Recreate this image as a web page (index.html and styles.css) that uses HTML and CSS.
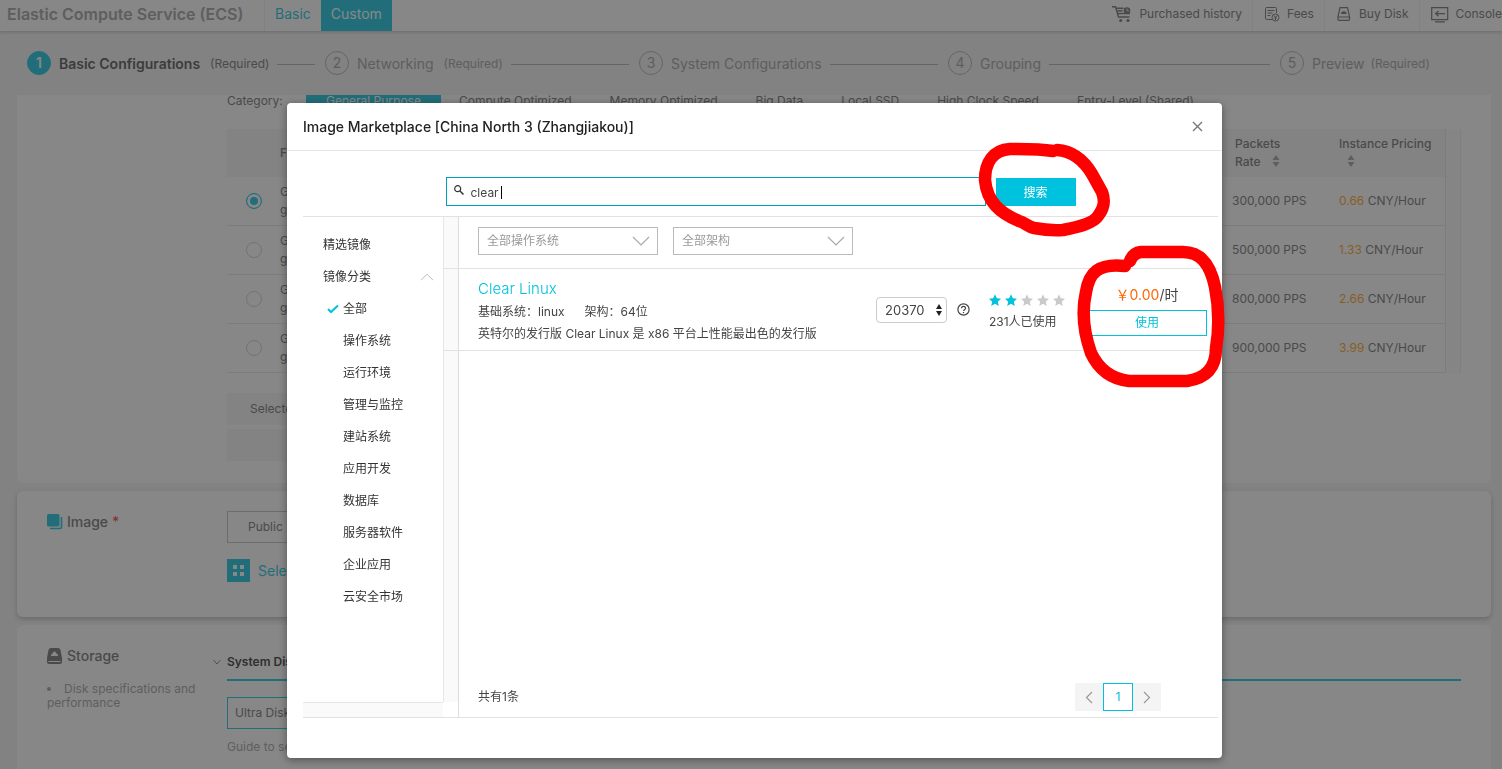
FILE: index.html
```html
<!DOCTYPE html>
<html lang="en">
<head>
<meta charset="utf-8">
<meta name="viewport" content="width=device-width, initial-scale=1">
<title>Elastic Compute Service (ECS)</title>
<link rel="stylesheet" href="styles.css">
</head>
<body>
<div class="page">
  <header class="topbar">
    <h1 class="brand">Elastic Compute Service (ECS)</h1>
    <nav class="modes">
      <a class="mode" href="#basic">Basic</a>
      <a class="mode mode-active" href="#custom">Custom</a>
    </nav>
    <nav class="links">
      <a class="link" href="#history">
        <svg width="20" height="18" viewBox="0 0 20 18" fill="none" stroke="currentColor" stroke-width="1.4"><path d="M0 1.7h3.500l3 10.300h11M4.500 3.200h7M5.500 5.800h5M6 8.500h12"/><circle cx="15" cy="5.500" r="3.300" fill="currentColor" stroke="none"/><path d="M15 3.500v2.200h2" stroke="#fff" stroke-width=".8"/><circle cx="8.700" cy="15.500" r="1.600" fill="currentColor" stroke="none"/><circle cx="16" cy="15.500" r="1.600" fill="currentColor" stroke="none"/></svg>
        <span>Purchased history</span>
      </a>
      <a class="link" href="#fees">
        <svg width="16" height="16" viewBox="0 0 16 16" fill="none" stroke="currentColor"><path d="M12.500 7V2.500a1 1 0 0 0-1-1h-9a1 1 0 0 0-1 1v10a1 1 0 0 0 1 1H8M3.500 4.500h7M3.500 7h5M3.500 9.500h3"/><circle cx="11.500" cy="11.500" r="3.500"/><path d="m10 9.500 1.500 2 1.500-2M11.500 11.500V14M10.300 12h2.400"/></svg>
        <span>Fees</span>
      </a>
      <a class="link" href="#disk">
        <svg width="16" height="16" viewBox="0 0 16 16" fill="none" stroke="currentColor" stroke-width="1.200"><path d="M4 1.700h7.500l2 9v2.600a1 1 0 0 1-1 1h-9.500a1 1 0 0 1-1-1v-2.600zM2 11h11.500"/><path d="M5 8a2.800 2.800 0 0 1 5.600 0z" fill="currentColor" stroke="none"/></svg>
        <span>Buy Disk</span>
      </a>
      <a class="link" href="#console">
        <svg width="18" height="17" viewBox="0 0 18 17" fill="none" stroke="currentColor" stroke-width="1.200"><path d="M.7 1.600h16v12H.7zM4 15.800h10M14 7.600H5M7.500 5 4.700 7.600l2.800 2.600"/></svg>
        <span>Console</span>
      </a>
    </nav>
  </header>

  <ol class="steps">
    <li class="step step-current"><span class="num">1</span><span class="name">Basic Configurations</span><span class="req">(Required)</span><i class="rule"></i></li>
    <li class="step"><span class="num">2</span><span class="name">Networking</span><span class="req">(Required)</span><i class="rule"></i></li>
    <li class="step"><span class="num">3</span><span class="name">System Configurations</span><i class="rule"></i></li>
    <li class="step"><span class="num">4</span><span class="name">Grouping</span><i class="rule"></i></li>
    <li class="step"><span class="num">5</span><span class="name">Preview</span><span class="req req-near">(Required)</span></li>
  </ol>

  <main class="cards">
    <section class="card card-instance">
      <div></div>
      <div class="card-body">
        <div class="categories">
          <span class="cat-label">Category:</span>
          <button class="cat cat-active">General Purpose</button>
          <button class="cat">Compute Optimized</button>
          <button class="cat">Memory Optimized</button>
          <button class="cat">Big Data</button>
          <button class="cat">Local SSD</button>
          <button class="cat">High Clock Speed</button>
          <button class="cat">Entry-Level (Shared)</button>
        </div>
        <div class="table-wrap">
          <table class="types">
            <colgroup><col class="c-radio"><col><col class="c-pps"><col class="c-price"></colgroup>
            <thead>
              <tr><th></th><th>Family</th><th class="inset">Packets<br>Rate <svg class="sort" width="8" height="12" viewBox="0 0 8 12"><path d="M4 0l3.500 5h-7zM4 12l3.500-5h-7z" fill="currentColor"/></svg></th><th>Instance Pricing<br><svg class="sort sort-only" width="8" height="12" viewBox="0 0 8 12"><path d="M4 0l3.500 5h-7zM4 12l3.500-5h-7z" fill="currentColor"/></svg></th></tr>
            </thead>
            <tbody>
              <tr><td class="pick"><input type="radio" name="type" aria-label="300,000 PPS" checked></td><td>General<br>g5</td><td>300,000 PPS</td><td><b>0.66</b> CNY/Hour</td></tr>
              <tr><td class="pick"><input type="radio" name="type" aria-label="500,000 PPS"></td><td>General<br>g5</td><td>500,000 PPS</td><td><b>1.33</b> CNY/Hour</td></tr>
              <tr><td class="pick"><input type="radio" name="type" aria-label="800,000 PPS"></td><td>General<br>g5</td><td>800,000 PPS</td><td><b>2.66</b> CNY/Hour</td></tr>
              <tr><td class="pick"><input type="radio" name="type" aria-label="900,000 PPS"></td><td>General<br>g5</td><td>900,000 PPS</td><td><b>3.99</b> CNY/Hour</td></tr>
            </tbody>
          </table>
        </div>
        <div class="summary">Selected</div>
        <div class="summary"></div>
      </div>
    </section>

    <section class="card card-image">
      <h2 class="card-title">
        <svg width="16" height="16" viewBox="0 0 16 16"><rect width="12.500" height="12.500" rx="1.500" fill="#00c1de"/><path d="M14.500 3v10a1.500 1.500 0 0 1-1.500 1.500H3" fill="none" stroke="#00c1de" stroke-width="1.600"/></svg>
        Image <span class="must">*</span>
      </h2>
      <div class="card-body">
        <button class="tab-button">Public</button>
        <a class="market" href="#market">
          <svg width="23" height="23" viewBox="0 0 23 23"><path fill="#00c1de" d="M0 0h23v23H0z"/><path fill="#fff" d="M6 6h4v4H6zM13 6h4v4h-4zM6 13h4v4H6zM13 13h4v4h-4z"/></svg>
          <span>Select</span>
        </a>
      </div>
    </section>

    <section class="card card-storage">
      <div>
        <h2 class="card-title">
          <svg width="16" height="16" viewBox="0 0 16 16"><path fill="#666" fill-rule="evenodd" d="M4 0h7Q13 0 13.500 2L15 10v4a2 2 0 0 1-2 2H2a2 2 0 0 1-2-2v-4L1.500 2Q2 0 4 0zM4 8h7q.5-2-1.500-2.500Q9 3.500 7.500 3.500T5.500 5.500Q3.500 6 4 8zM1.500 13v1h12v-1z"/></svg>
          Storage
        </h2>
        <ul class="notes"><li>Disk specifications and performance</li></ul>
      </div>
      <div class="card-body">
        <h3 class="disk-title"><svg width="10" height="10" viewBox="0 0 10 10"><path d="m1.500 3 3.500 4 3.500-4" fill="none" stroke="#777"/></svg>System Disk</h3>
        <button class="disk-type">Ultra Disk</button>
        <p class="guide">Guide to se</p>
      </div>
    </section>
  </main>
</div>

<div class="mask">
  <section class="modal" role="dialog" aria-labelledby="dlg">
    <header class="modal-head">
      <h2 class="modal-title" id="dlg">Image Marketplace [China North 3 (Zhangjiakou)]</h2>
      <button class="close" aria-label="Close"><svg width="11" height="11" viewBox="0 0 11 11"><path d="m1 1 9 9M10 1l-9 9" stroke="#777" stroke-width="1.400"/></svg></button>
    </header>

    <div class="market-box">
      <form class="search">
        <label class="field">
          <svg class="lens" width="10" height="10" viewBox="0 0 10 10" fill="none" stroke="#333"><circle cx="3.700" cy="3.700" r="3" stroke-width="1.200"/><path d="m6 6 3.500 3.500" stroke-width="1.500"/></svg>
          <input class="query" type="text" value="clear" aria-label="搜索">
          <i class="caret"></i>
        </label>
        <button class="go" type="button">搜索</button>
      </form>

      <div class="browser">
        <aside class="side">
          <ul class="menu">
            <li><a href="#featured">精选镜像</a></li>
            <li><a class="group" href="#groups">镜像分类 <svg width="14" height="8" viewBox="0 0 14 8"><path d="m1 7.200 6-6 6 6" fill="none" stroke="#bbb"/></svg></a></li>
            <li><a class="sub" href="#all"><svg class="tick" width="12" height="10" viewBox="0 0 12 10"><path d="m1 5 3 3 7-6.500" fill="none" stroke="#00c1de" stroke-width="2"/></svg>全部</a></li>
            <li><a class="sub" href="#os">操作系统</a></li>
            <li><a class="sub" href="#runtime">运行环境</a></li>
            <li><a class="sub" href="#manage">管理与监控</a></li>
            <li><a class="sub" href="#site">建站系统</a></li>
            <li><a class="sub" href="#dev">应用开发</a></li>
            <li><a class="sub" href="#db">数据库</a></li>
            <li><a class="sub" href="#server">服务器软件</a></li>
            <li><a class="sub" href="#business">企业应用</a></li>
            <li><a class="sub" href="#security">云安全市场</a></li>
          </ul>
          <div class="track-v"></div>
          <div class="track-h"></div>
        </aside>

        <div class="list">
          <div class="filters">
            <span class="drop"><select aria-label="操作系统"><option>全部操作系统</option></select><svg width="18" height="10" viewBox="0 0 18 10"><path d="m1 1 8 8 8-8" fill="none" stroke="#aaa" stroke-width="1.200"/></svg></span>
            <span class="drop"><select aria-label="架构"><option>全部架构</option></select><svg width="18" height="10" viewBox="0 0 18 10"><path d="m1 1 8 8 8-8" fill="none" stroke="#aaa" stroke-width="1.200"/></svg></span>
          </div>

          <article class="result">
            <div class="info">
              <h3><a href="#clear">Clear Linux</a></h3>
              <p class="meta"><span>基础系统：linux</span><span>架构：64位</span></p>
              <p>英特尔的发行版 Clear Linux 是 x86 平台上性能最出色的发行版</p>
            </div>
            <div class="version">
              <span class="ver"><select aria-label="Version"><option>20370</option></select><svg width="6" height="12" viewBox="0 0 6 12"><path d="M3 0l3 5H0zM3 12l3-5H0z" fill="#222"/></svg></span>
              <svg width="13" height="13" viewBox="0 0 13 13" fill="none" stroke="#444" stroke-width="1.200"><circle cx="6.500" cy="6.500" r="5.600"/><path d="M4.500 5.300c0-2.600 4-2.600 4 0 0 1.300-2 1.400-2 2.700M6.500 9v1.300"/></svg>
            </div>
            <div class="usage">
              <svg width="78" height="13" viewBox="0 0 78 13"><defs><path id="star" d="m6 .2 1.800 4.100 4.200.4-3.200 3 1 4.300L6 9.700 2.200 12l1-4.300L0 4.700l4.200-.4z"/></defs><g fill="#00c1de"><use href="#star"/><use href="#star" x="16"/></g><g fill="#c8cacc"><use href="#star" x="32"/><use href="#star" x="48"/><use href="#star" x="64"/></g></svg>
              <span>231人已使用</span>
            </div>
            <div class="buy">
              <p class="price"><b>￥0.00</b>/时</p>
              <button class="use">使用</button>
            </div>
          </article>

          <footer class="pager">
            <span>共有1条</span>
            <nav class="pages">
              <button class="page-btn" aria-label="Previous"><svg width="8" height="13" viewBox="0 0 8 13"><path d="M7 1 1.500 6.500 7 12" fill="none" stroke="#999" stroke-width="1.200"/></svg></button>
              <button class="page-btn page-on">1</button>
              <button class="page-btn" aria-label="Next"><svg width="8" height="13" viewBox="0 0 8 13"><path d="m1 1 5.500 5.500L1 12" fill="none" stroke="#999" stroke-width="1.200"/></svg></button>
            </nav>
          </footer>
        </div>
      </div>
    </div>

    <svg class="marks" width="260" height="260" viewBox="970 136 260 260" fill="none" stroke="#f00" stroke-width="12.500" stroke-linecap="round" stroke-linejoin="round" aria-hidden="true">
      <path d="M1053 151C1040 149 1022 149 1010 149C993 150 985 163 985 180C987 202 1000 213 1019 221C1026 223 1028 227 1034 228Q1050 231 1063 230C1078 227 1094 223 1098 216C1105 207 1105 200 1102 192L1092 174C1083 159 1072 151 1057 150"/>
      <path d="M1125 266C1098 263 1089 273 1086 292C1081 314 1085 336 1091 353C1099 370 1111 379 1129 381H1187C1206 378 1216 368 1216 348C1219 330 1219 307 1215 287C1210 263 1200 252 1183 252H1141Q1133 253 1130 261"/>
    </svg>
  </section>
</div>
</body>
</html>
```
FILE: styles.css
```css
* { box-sizing: border-box; }
body {
  margin: 0;
  background: #f2f2f2;
  color: #666;
  font: 12px/18px Inter, "Noto Sans CJK SC", sans-serif;
}
h1, h2, h3, p, ul, ol { margin: 0; padding: 0; font-size: inherit; font-weight: inherit; }
ul, ol { list-style: none; }
a { color: inherit; text-decoration: none; }
button, input, select { font: inherit; color: inherit; margin: 0; border-radius: 0; }
svg { display: block; flex: none; }

.page { height: 100vh; overflow: hidden; display: flex; flex-direction: column; }

.topbar {
  display: flex;
  flex: none;
  height: 31px;
  padding-left: 7px;
  background: #fff;
  box-shadow: 0 1px 3px rgba(0, 0, 0, .25);
  line-height: 28px;
  overflow: hidden;
}
.brand { width: 257px; font-size: 16px; font-weight: 600; color: #999; white-space: nowrap; }
.modes { display: flex; border-left: 1px solid #f0f0f0; font-size: 14px; }
.mode { padding: 0 10px; color: #00c1de; }
.mode-active { background: #00c1de; color: #fff; }
.links { display: flex; margin-left: auto; }
.link { display: flex; align-items: center; gap: 7px; height: 31px; padding: 0 10px 3px 11px; border-right: 1px solid #f0f0f0; white-space: nowrap; }
.link:last-child { padding-right: 0; border: 0; }

.steps {
  display: grid;
  flex: none;
  grid-template-columns: 298fr 314fr 309fr 332fr 222px;
  height: 64px;
  padding-left: 27px;
  color: #999;
}
.step { display: flex; align-items: center; white-space: nowrap; }
.num { width: 24px; height: 24px; margin-right: 8px; border: 1px solid #aaa; border-radius: 50%; font-size: 14px; line-height: 22px; text-align: center; }
.name { padding-top: 2px; font-size: 14px; }
.req { margin-left: 10px; padding-top: 2px; }
.req-near { margin-left: 6px; }
.rule { flex: 1; height: 1px; margin: 2px 10px 0 8px; background: #aaa; }
.step-current { color: #666; }
.step-current .num { border-color: #00c1de; background: #00c1de; color: #fff; font-weight: 600; }
.step-current .name { font-weight: 600; color: #444; }

.cards { flex: 1; display: flex; flex-direction: column; gap: 8px; min-height: 0; padding: 0 11px 0 17px; overflow: hidden; }
.card { display: grid; flex: none; grid-template-columns: 180px 1fr; padding: 20px 30px; background: #fff; border-radius: 6px; }
.card-instance { padding-top: 0; padding-bottom: 18px; border-radius: 0 0 6px 6px; }
.card-image { min-height: 126px; box-shadow: 0 2px 5px rgba(0, 0, 0, .25); }
.card-storage { min-height: 160px; }
.card-title { display: flex; gap: 4px; align-items: center; height: 22px; font-size: 14px; font-weight: 500; }
.must { color: #e33; }

.categories { display: flex; height: 20px; line-height: 12px; white-space: nowrap; }
.cat-label { width: 79px; }
.cat { display: flex; padding: 0 20px; margin-right: -2px; border: 0; background: none; }
.cat-active { background: #00c1de; color: #fff; }
.table-wrap { margin-top: 14px; padding-right: 14px; background: #fafafa; border-right: 1px solid #eaeaea; }
.types { width: 100%; table-layout: fixed; border-collapse: separate; border-spacing: 0; border-right: 1px solid #e4e4e4; background: #fff; }
.c-radio { width: 46px; }
.c-pps { width: 107px; }
.c-price { width: 113px; }
.types th { height: 48px; padding: 0 7px; background: #f5f5f5; font-weight: 500; text-align: left; white-space: nowrap; }
.types .inset { padding-left: 10px; }
.types td { height: 49px; padding: 0 7px; border-bottom: 1px solid #e4e4e4; }
.types b { font-weight: 400; color: #f90; }
.types .pick { padding: 0 0 0 19px; }
.pick input { display: block; appearance: none; width: 16px; height: 16px; border: 1px solid #ccc; border-radius: 50%; }
.pick input:checked { border-color: #00c1de; background: #00c1de; box-shadow: inset 0 0 0 3px #fff; }
.sort { display: inline-block; margin-left: 8px; vertical-align: -1px; color: #999; }
.summary { width: 70%; height: 32px; margin-bottom: 4px; padding: 7px 23px; background: #f5f5f5; }
.table-wrap + .summary { margin-top: 20px; }

.tab-button { display: block; height: 32px; padding: 0 20px; border: 1px solid #bbb; background: none; }
.market { display: flex; align-items: center; gap: 8px; margin-top: 16px; color: #00c1de; font-size: 14px; }
.notes { margin-top: 15px; color: #999; line-height: 14px; list-style: disc inside; }
.card-storage .card-body { background: linear-gradient(#00c1de, #00c1de) 0 34px / 100% 2px no-repeat; }
.disk-title { display: flex; align-items: center; gap: 5px; height: 34px; margin-left: -15px; font-weight: 600; color: #222; }
.disk-type { display: block; width: 200px; height: 32px; margin-top: 18px; padding: 0 7px; border: 1px solid #00c1de; background: none; text-align: left; }
.guide { margin-top: 9px; color: #999; }

.mask {
  position: fixed;
  inset: 0;
  display: flex;
  justify-content: center;
  align-items: flex-start;
  padding: 103px 0 0 7px;
  background: rgba(55, 55, 55, .6);
  overflow: hidden;
}
.modal { position: relative; width: 935px; max-width: 100%; padding-bottom: 40px; border-radius: 4px; background: #fff; color: #444; box-shadow: 0 2px 8px rgba(0, 0, 0, .4); }
.modal-head { display: flex; justify-content: space-between; align-items: center; height: 48px; padding: 0 19px 0 16px; border-bottom: 1px solid #e6e6e6; }
.modal-title { font-size: 14px; font-weight: 500; color: #222; }
.close { padding: 0; border: 0; background: none; }

.market-box { margin: 0 4px 0 16px; border-bottom: 1px solid #e2e2e2; }
.search { display: flex; justify-content: center; gap: 10px; height: 66px; padding-top: 26px; border-bottom: 1px solid #e2e2e2; }
.field { position: relative; width: 540px; }
.query { display: block; width: 100%; height: 29px; padding: 2px 24px 0; border: 1px solid #00a0c0; background: none; }
.lens { position: absolute; left: 8px; top: 8px; }
.caret { position: absolute; left: 55px; top: 9px; width: 1px; height: 13px; background: #000; }
.go { width: 80px; height: 28px; margin-top: 1px; padding: 2px 0 0; border: 0; background: #00c1de; color: #fff; }

.browser { display: grid; grid-template-columns: 156px 1fr; min-height: 500px; }
.side { display: grid; grid-template-columns: 140px 1fr; grid-template-rows: 1fr 15px; border-right: 1px solid #ddd; }
.menu { padding: 12px 0 80px; line-height: 32px; color: #333; }
.menu a { display: flex; align-items: center; padding-left: 20px; }
.menu .group { justify-content: space-between; padding-right: 9px; }
.menu .sub { position: relative; padding-left: 40px; }
.tick { position: absolute; left: 24px; top: 11px; }
.track-v { border-left: 1px solid #e6e6e6; background: #fafafa; }
.track-h { border-top: 1px solid #e6e6e6; background: #fafafa; }

.list { display: flex; flex-direction: column; }
.filters, .result { display: flex; position: relative; margin-left: -15px; padding-left: 34px; border-bottom: 1px solid #e2e2e2; }
.filters { gap: 15px; height: 52px; padding-top: 10px; }
.drop { position: relative; width: 180px; height: 28px; }
.drop select { appearance: none; width: 100%; height: 28px; padding: 0 8px; border: 1px solid #bbb; background: none; color: #999; }
.drop svg { position: absolute; right: 8px; top: 9px; pointer-events: none; }
.result { align-items: center; height: 82px; }
.info { flex: 1; padding-top: 2px; line-height: 22px; }
.info h3 { line-height: 24px; font-size: 15px; font-weight: 300; color: #00c1de; }
.meta { display: flex; gap: 20px; }
.version { display: flex; align-items: center; gap: 10px; width: 113px; }
.ver { position: relative; width: 71px; }
.ver select { display: block; appearance: none; width: 100%; height: 26px; padding: 0 8px; border: 1px solid #ccc; border-radius: 4px; background: none; font-size: 13px; }
.ver svg { position: absolute; right: 5px; top: 7px; pointer-events: none; }
.usage { width: 98px; padding-top: 7px; line-height: 20px; }
.usage svg { margin-bottom: 5px; }
.buy { width: 131px; padding: 0 11px 4px 0; text-align: center; }
.price { font-size: 14px; line-height: 30px; }
.price b { font-weight: 400; color: #f60; }
.use { display: block; width: 100%; height: 26px; padding: 0; border: 1px solid #00c1de; background: none; color: #00c1de; }

.pager { display: flex; justify-content: space-between; align-items: center; margin: auto 57px 6px 19px; }
.pages { display: flex; }
.page-btn { display: flex; align-items: center; justify-content: center; width: 28px; height: 28px; padding: 0; border: 0; background: #f4f4f4; }
.page-on { width: 30px; border: 1px solid #00c1de; background: #fff; color: #00c1de; }

.marks { position: absolute; left: 683px; top: 33px; pointer-events: none; }
```
